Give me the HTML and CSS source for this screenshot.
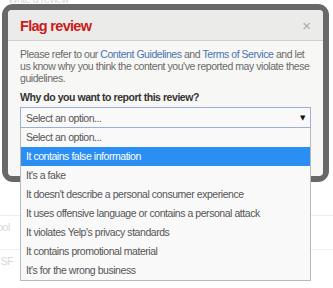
FILE: index.html
```html
<!DOCTYPE html>
<html>
<head>
<meta charset="utf-8">
<link rel="stylesheet" href="styles.css">
</head>
<body>
<div class="page">
  <div class="page-top">Write a review</div>
  <div class="page-row r1">Cool</div>
  <div class="page-row r2">ot SF</div>
</div>
<div class="frame">
  <div class="modal">
    <div class="modal-head">
      <h2 class="title">Flag review</h2>
      <span class="close">×</span>
    </div>
    <div class="modal-body">
      <p class="intro">Please refer to our <a class="lnk">Content Guidelines</a> and <a class="lnk">Terms of Service</a> and let us know why you think the content you've reported may violate these guidelines.</p>
      <div class="label">Why do you want to report this review?</div>
      <div class="select">
        <span>Select an option...</span>
        <span class="arrow">▼</span>
      </div>
    </div>
  </div>
</div>
<ul class="dropdown">
  <li>Select an option...</li>
  <li class="hl">It contains false information</li>
  <li>It's a fake</li>
  <li>It doesn't describe a personal consumer experience</li>
  <li>It uses offensive language or contains a personal attack</li>
  <li>It violates Yelp's privacy standards</li>
  <li>It contains promotional material</li>
  <li>It's for the wrong business</li>
</ul>
</body>
</html>
```
FILE: styles.css
```css
* { box-sizing: border-box; }
html, body { margin: 0; padding: 0; }
body {
  width: 333px;
  height: 288px;
  overflow: hidden;
  background: #fff;
  font-family: "Liberation Sans", Arial, sans-serif;
  position: relative;
}
.page { color: #d6d6d6; font-size: 10.5px; letter-spacing: -0.4px; }
.page-top { margin-top: -7px; padding-left: 8px; height: 188px; }
.page-row {
  border-top: 1px solid #eee;
  height: 34px;
  padding-top: 5px;
  margin-left: -10px;
}
.r1 { margin-top: 34px; }
.frame {
  position: absolute;
  left: 2px;
  top: 4px;
  width: 327px;
  height: 178px;
  border: 6px solid #686868;
  border-radius: 11px;
  background: #686868;
}
.modal {
  background: #f7f7f5;
  border-radius: 4px;
  height: 100%;
  overflow: hidden;
}
.modal-head {
  display: flex;
  align-items: center;
  justify-content: space-between;
  height: 31px;
  background: #ebebe9;
  border-bottom: 1px solid #cfcfcd;
  padding: 0 12px 0 12px;
}
.title {
  margin: 0;
  font-size: 14.5px;
  font-weight: bold;
  letter-spacing: -0.7px;
  color: #c91b1b;
  padding-top: 1px;
}
.close { color: #aaa; font-size: 15px; }
.modal-body { padding: 7px 12px 0 12px; }
.intro {
  margin: 0;
  font-size: 10.5px;
  letter-spacing: -0.45px;
  line-height: 12px;
  color: #6a6a6a;
}
.lnk { color: #4a72b0; text-decoration: none; }
.label {
  margin-top: 6px;
  font-size: 10.5px;
  letter-spacing: -0.45px;
  font-weight: bold;
  color: #333;
  line-height: 14px;
}
.select {
  margin-top: 3px;
  height: 21px;
  border: 1px solid #9cb0d6;
  background: #f9f9f9;
  display: flex;
  align-items: center;
  justify-content: space-between;
  padding: 0 5px 0 5px;
  font-size: 10.5px;
  letter-spacing: -0.45px;
  color: #555;
}
.arrow { font-size: 7px; color: #111; font-family: "DejaVu Sans", sans-serif; }
.dropdown {
  position: absolute;
  left: 20px;
  top: 128px;
  width: 291px;
  margin: 0;
  padding: 0;
  list-style: none;
  background: #f9f9f9;
  border: 1px solid #b8b8b8;
  border-top: none;
  font-size: 10.5px;
  letter-spacing: -0.45px;
  color: #555;
}
.dropdown li {
  height: 19px;
  line-height: 19px;
  padding-left: 5px;
}
.dropdown li.hl { background: #2a8ef2; color: #fff; }
```
